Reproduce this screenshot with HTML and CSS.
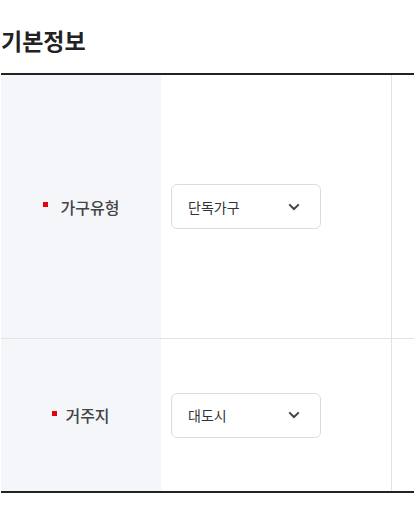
FILE: index.html
```html
<!DOCTYPE html>
<html lang="ko">
<head>
<meta charset="utf-8">
<link rel="stylesheet" href="styles.css">
</head>
<body>
<div class="page">
  <h2 class="title">기본정보</h2>
  <div class="table">
    <div class="row row-tall">
      <div class="label"><span class="req"></span><span class="label-text wide">가구유형</span></div>
      <div class="value">
        <div class="select"><span>단독가구</span>
          <svg class="chev" width="12" height="8" viewBox="0 0 12 8"><path d="M1.2 1.4 L6 6 L10.8 1.4" fill="none" stroke="#444" stroke-width="2"/></svg>
        </div>
      </div>
      <div class="extra"></div>
    </div>
    <div class="row row-short">
      <div class="label"><span class="req"></span><span class="label-text">거주지</span></div>
      <div class="value">
        <div class="select"><span>대도시</span>
          <svg class="chev" width="12" height="8" viewBox="0 0 12 8"><path d="M1.2 1.4 L6 6 L10.8 1.4" fill="none" stroke="#444" stroke-width="2"/></svg>
        </div>
      </div>
      <div class="extra"></div>
    </div>
  </div>
</div>
</body>
</html>
```
FILE: styles.css
```css
html, body {
  margin: 0;
  padding: 0;
  background: #fff;
  overflow: hidden;
}
body {
  font-family: "Noto Sans CJK KR", "Noto Sans", sans-serif;
  color: #222;
}
.page {
  padding-left: 1px;
}
.title {
  margin: 0;
  padding-top: 24px;
  margin-bottom: 17px;
  font-size: 23px;
  line-height: 32px;
  font-weight: 700;
  color: #222;
}
.table {
  border-top: 2px solid #222;
  border-bottom: 2px solid #222;
}
.row {
  display: grid;
  grid-template-columns: 160px 230px 1fr;
}
.row + .row {
  border-top: 1px solid #e2e2e2;
}
.row-tall { height: 263px; }
.row-short { height: 152px; }
.label {
  background: #f5f6fa;
  display: flex;
  align-items: center;
  justify-content: center;
  font-size: 16px;
  font-weight: 500;
  color: #444;
}
.req {
  width: 5px;
  height: 5px;
  background: #e60012;
  margin-right: 8px;
  position: relative;
  top: -2px;
}
.label-text.wide {
  margin-left: 5px;
}
.value {
  display: flex;
  align-items: center;
  padding-left: 10px;
}
.extra {
  border-left: 1px solid #e2e2e2;
}
.select {
  box-sizing: border-box;
  width: 150px;
  height: 45px;
  border: 1px solid #dcdcdc;
  border-radius: 6px;
  display: flex;
  align-items: center;
  justify-content: space-between;
  padding: 0 20px 0 16px;
  font-size: 14px;
  color: #333;
  background: #fff;
}
.chev {
  display: block;
}
```
